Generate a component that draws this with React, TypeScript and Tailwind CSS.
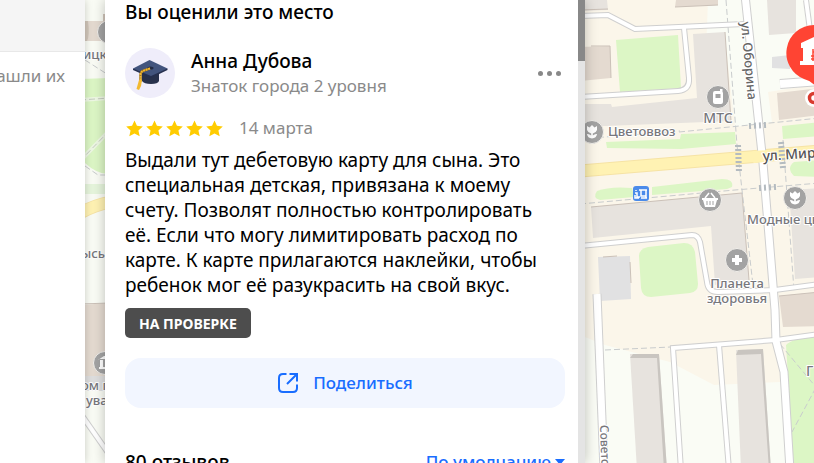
import React from 'react';
import { clsx } from 'clsx';

const STAR = 'M8 0.4l2.300 5.100 5.500.6-4.100 3.700 1.200 5.500L8 12.600l-4.900 2.700 1.200-5.500L.2 6.100l5.500-.6z';

const reviewText =
    'Выдали тут дебетовую карту для сына. Это специальная детская, привязана к моему счету. Позволят полностью контролировать её. Если что могу лимитировать расход по карте. К карте прилагаются наклейки, чтобы ребенок мог её разукрасить на свой вкус.';

const roads = [
    { d: 'M580 16L608 15L635 29L744 24', w: 4 },
    { d: 'M684 28L689 78Q690 90 678 91L580 97', w: 4 },
    { d: 'M780 84L820 81', w: 8 },
    { d: 'M806 0L810 30', w: 4 },
    { d: 'M580 246L692 235Q698 235 700 242L707 282Q708 292 718 292L775 290L820 284', w: 4 },
    { d: 'M597 294L604 470', w: 7 },
    { d: 'M681 470L673 348L776 340L820 334', w: 4 },
    { d: 'M719 345L729 470', w: 4 },
    { d: 'M745 -5L763 163L775 310L776 341L784 372L790 470', w: 7 },
    { d: 'M76 407L125 477', w: 4 },
];

const greens = [
    'M616 40L678 35L681 88L620 92Z',
    'M606 142L680 139L681 134L735 132L736 144L681 149L607 148Z',
    'M782 126L820 122L820 136L783 139Z',
    'M597 191Q610 186 632 188L634 197L600 200Q592 198 597 191Z',
    'M652 187L722 179Q734 179 732 187L727 189L652 195Z',
    'M794 162L820 160L820 177L794 176Q786 168 794 162Z',
    'M648 247L684 243Q693 243 695 252L698 284Q698 292 690 293L651 297Q642 297 641 288L639 256Q639 249 648 247Z',
    'M786 345Q795 336 820 337L820 470L794 470Z',
    'M80 79L110 78L110 174Q98 175 85 163L80 160Z',
];

const greyHouses = [
    'M580 0L607 0L608 10L580 11Z',
    'M693 34L725 32L731 121L580 127L580 104L611 104L612 107L697 98Z',
    'M767 0L796 0L796 33L769 35Z',
    'M591 207L742 193L749 280L715 285L711 226L593 238Z',
    'M789 190L820 188L820 277L795 279Z',
    'M630 354L659 354L667 470L637 470Z',
    'M736 350L763 349L771 470L741 470Z',
];

const tanHouses = [
    'M676 0L718 0L718 5L675 7Z',
    'M580 47L610 46L611 78L580 81Z',
    'M777 93L820 88L820 115L779 120Z',
    'M779 296L820 292L820 326L783 327Z',
    'M80 21L110 21L110 41L80 41Z',
    'M80 305L110 303L110 377L80 377Z',
];

const dashes = [
    'M726 0L737 145L742 190L753 285',
    'M679 132L780 122L820 118',
    'M580 139L680 131',
    'M580 204L735 190L820 183',
    'M783 140L794 290',
    'M605 350L671 347',
    'M780 344L820 392',
    'M820 380L792 432',
    'M85 60L110 76M85 166L98 175L110 175',
];

const houseEdges = [
    'M580 10L608 9',
    'M675 7L718 5',
    'M610 46L611 78M591 46L610 46',
    'M591 207L742 193L749 280',
    'M725 32L731 121',
    'M603 257L617 256M630 262L631 283',
    'M779 296L820 292',
    'M80 304L110 303',
];

const parkPaths = 'M80 100L110 98M80 161L110 130';

function CityMap() {
    return (
        <svg
            className="absolute inset-0 h-full w-full"
            viewBox="0 0 814 463"
            preserveAspectRatio="xMinYMin slice"
            fontFamily="'Noto Sans', sans-serif"
            role="img"
            aria-label="Карта"
        >
            <rect width="814" height="463" fill="#fafcf5" />
            <path
                d="M580 0H708L706 52L727 55L735 127L772 122L768 92L820 84V160L820 340L780 382L714 385L670 362L605 345L580 335Z"
                fill="#fbf6ea"
            />
            {greens.map((d) => (
                <path key={d} d={d} fill="#dcf6c5" />
            ))}
            <path d="M80 184L110 184L110 194L80 194Z" fill="#e6f5dc" />
            {greyHouses.map((d) => (
                <path key={d} d={d} fill="#e7e3de" />
            ))}
            {tanHouses.map((d) => (
                <path key={d} d={d} fill="#e4dad0" />
            ))}
            <path d="M80 21h8q2 14-1 20h-7zM103 14h7v8h-7z" fill="#d0c5b9" />
            <path d="M598 257L630 256L631 299L600 301ZM772 57L790 55L790 69L772 68Z" fill="#e1e1e2" />
            <path d="M80 376H110V391H80Z" fill="#dedede" />
            <path
                d="M630 358L633 354L659 354L667 470L664 470L657 358ZM736 355L738 350L763 349L771 470L769 470L761 354Z"
                fill="#c9c5c0"
            />
            {houseEdges.map((d) => (
                <path key={d} d={d} fill="none" stroke="#cbc1b8" />
            ))}
            <path d={parkPaths} fill="none" stroke="#eef8e4" strokeWidth="4" />
            <path d={parkPaths} fill="none" stroke="#c5ccc0" strokeDasharray="6 3" />
            {dashes.map((d) => (
                <path key={d} d={d} fill="none" stroke="#c9cccd" strokeDasharray="6 3" />
            ))}

            <path d="M580 171L820 151M80 213Q95 205 110 202" fill="none" stroke="#f6e3a5" strokeWidth="13" />
            <path d="M580 171L820 151M80 213Q95 205 110 202" fill="none" stroke="#fff2b3" strokeWidth="11" />
            {roads.map((r) => (
                <path key={r.d} d={r.d} fill="none" stroke="#cfcfcf" strokeWidth={r.w + 2} />
            ))}
            {roads.map((r) => (
                <path key={r.d} d={r.d} fill="none" stroke="#fff" strokeWidth={r.w} />
            ))}
            <path d="M753 157L769 156" stroke="#fff2b3" strokeWidth="12" />
            <path
                d="M738 145L739 173M781 142L783 168"
                fill="none"
                stroke="#b4bbc0"
                strokeWidth="6"
                strokeDasharray="2 2"
            />
            <path
                d="M749 126L766 125M759 188L776 187"
                fill="none"
                stroke="#b4bbc0"
                strokeWidth="6"
                strokeDasharray="2 3"
            />

            {/* places */}
            <g fill="#a3a3a3" stroke="#f2f0ec">
                <circle cx="592" cy="132" r="11.5" />
                <circle cx="718" cy="97" r="11.5" />
                <circle cx="710" cy="200" r="11.5" />
                <circle cx="795" cy="198" r="11.5" />
                <circle cx="737" cy="260" r="11.5" />
                <circle cx="105" cy="363" r="11.5" />
                <circle cx="109" cy="32" r="11.5" />
            </g>
            <g fill="#fff">
                <path
                    id="tulip"
                    d="M587 126l2.500 1.500L592 125l2.500 2.500L597 126v4q-1 3-4.200 3.400v2.200q2-2 4.200-1.600-.5 4-5 4.500-4.500-.5-5-4.500 2.200-.4 4.200 1.600v-2.200Q588 133 587 130z"
                />
                <use href="#tulip" x="203" y="66" />
                <path
                    fillRule="evenodd"
                    d="M715 91h5v-2h2.500v3q.5.500.5 1v9q0 2-2 2h-6q-2 0-2-2v-9q0-2 2-2zm.5 3v4h5v-4z"
                />
                <path d="M735 255h4v3h3v4h-3v3h-4v-3h-3v-4h3z" />
                <path d="M702 198h16v2h-1l-2 7h-10l-2-7h-1z" />
                <path d="M98 360l6-4h6v3h-11zM100 360h3v8h-3zM105 360h3v8h-3zM99 367h12v2H99z" />
            </g>
            <path d="M705 198l4-5M715 198l-4-5" stroke="#fff" strokeWidth="1.5" />
            <path d="M707 201v4M710 201v4M713 201v4" stroke="#a3a3a3" />
            <rect x="633" y="186" width="16" height="15" rx="3" fill="#4b8bea" />
            <path
                d="M639 190h8M641 190v6h5v-6M636 190v1M635 193h2v4h3M635 195v3h4M646 196v2M641 198h6"
                fill="none"
                stroke="#fff"
                strokeWidth="1.5"
            />

            <g
                fill="#77777c"
                stroke="#fff"
                strokeWidth="2"
                strokeLinejoin="round"
                paintOrder="stroke"
                fontSize="13"
                fontWeight="500"
            >
                <text x="608" y="136">Цветоввоз</text>
                <text x="718" y="123" textAnchor="middle" fontSize="14">МТС</text>
                <text x="747" y="224">Модные цветы</text>
                <text x="737" y="288" textAnchor="middle">Планета</text>
                <text x="737" y="303" textAnchor="middle">здоровья</text>
                <text x="806" y="376" fontSize="14">Г</text>
                <text x="83" y="59">ицк</text>
                <text x="81" y="258">ысь</text>
                <text x="81" y="390">ом п</text>
                <text x="86" y="405">ува</text>
                <text transform="translate(741 22) rotate(85)" fill="#666">ул. Оборина</text>
                <text transform="translate(600 425) rotate(88)" fontSize="12">Советская</text>
                <text transform="translate(763 161) rotate(-4)" fill="#555" fontSize="14">ул. Мира</text>
            </g>

            {/* selected place */}
            <path d="M816 25h-2a28 28 0 0 0-10 54q8 2 12 8z" fill="#ff4433" />
            <path d="M801 48v-5l15-7v29h-16v-4h3V48z" fill="#fff" />
            <path d="M813 52h3M811 56h5M811 59h5M813 49v12" fill="none" stroke="#ff4433" strokeWidth="1.5" />
            <circle cx="814" cy="98" r="9" fill="#fff" />
            <path d="M816 93.500h-2a4.500 4.500 0 0 0 0 9h2" fill="none" stroke="#d93a2f" strokeWidth="3.500" />
        </svg>
    );
}

function GraduationCap() {
    return (
        <svg viewBox="0 0 50 50" className="h-[50px] w-[50px] shrink-0" aria-hidden="true">
            <circle cx="25" cy="25" r="25" fill="#efedfa" />
            <path d="M17 23v10q2 3 9 3t8-3V23z" fill="#28314c" />
            <path d="M8 20.500v1.500l18 8 16.500-8v-1.500z" fill="#26304f" />
            <path d="M8 20.500L24.500 12 42.500 20.500 26 28z" fill="#42547d" />
            <ellipse cx="25.500" cy="20" rx="3" ry="1.500" fill="#222b44" />
            <path d="M25 20.500l-6 2q-3.500 1-3.500 5v6" fill="none" stroke="#8a6420" strokeWidth="2.500" />
            <path d="M25 20.500l-6 2q-3.500 1-3.500 5v6" fill="none" stroke="#f2b930" strokeWidth="2" strokeDasharray="2 .6" />
            <path d="M14 32h3l-1 6-2 4-2.500-1z" fill="#f2b930" />
        </svg>
    );
}

function ShareIcon() {
    return (
        <svg
            viewBox="0 0 22 22"
            className="h-[22px] w-[22px]"
            fill="none"
            stroke="#196dff"
            strokeWidth="2"
            aria-hidden="true"
        >
            <path d="M9.500 2H6Q2 2 2 6v10q0 4 4 4h10q4 0 4-4v-3.500" />
            <path d="M10 12L19.500 2.500M12.500 2H20v7.500" />
        </svg>
    );
}

function Stars({ count }: { count: number }) {
    return (
        <div className="flex gap-[3px]" role="img" aria-label={`Оценка ${count} из 5`}>
            {[1, 2, 3, 4, 5].map((n) => (
                <svg
                    key={n}
                    viewBox="0 0 16 16"
                    className={clsx('h-[17px] w-[17px]', n <= count ? 'fill-[#ffcc00]' : 'fill-gray-300')}
                >
                    <path d={STAR} />
                </svg>
            ))}
        </div>
    );
}

function Review() {
    return (
        <article>
            <div className="flex items-center">
                <GraduationCap />
                <div className="ml-4 flex-1">
                    <h3 className="text-[19px] leading-[26px] font-medium">Анна Дубова</h3>
                    <p className="text-[17px] leading-6 text-[#8a8a8a]">Знаток города 2 уровня</p>
                </div>
                <button type="button" aria-label="Ещё" className="mr-1 flex gap-1">
                    <span className="h-[5px] w-[5px] rounded-full bg-[#888]" />
                    <span className="h-[5px] w-[5px] rounded-full bg-[#888]" />
                    <span className="h-[5px] w-[5px] rounded-full bg-[#888]" />
                </button>
            </div>
            <div className="mt-[18px] flex h-6 items-center gap-4 pl-px">
                <Stars count={5} />
                <time className="text-[17px] leading-6 text-[#8a8a8a]">14 марта</time>
            </div>
            <p className="mt-2 pr-4 text-[19px] leading-[25px]">{reviewText}</p>
            <span className="mt-[10px] inline-flex h-[30px] items-center rounded-[5px] bg-[#4d4d4d] px-[14px] text-[14px] font-bold text-white">
                НА ПРОВЕРКЕ
            </span>
        </article>
    );
}

export default function App() {
    return (
        <main className="relative h-screen overflow-hidden bg-white font-['Noto_Sans',sans-serif] text-black">
            <CityMap />
            <div className="relative flex h-full gap-5">
                <aside className="w-[85px] shrink-0 overflow-hidden bg-white shadow-[0_0_8px_rgba(0,0,0,0.2)]">
                    <div className="h-[52px] border-b border-[#e8e8e8] bg-[#f5f5f5]" />
                    <p className="mt-3 flex justify-end pr-5 text-[17px] leading-6 whitespace-nowrap text-[#8a8a8a]">нашли их</p>
                </aside>

                <section className="flex w-[480px] shrink-0 overflow-hidden bg-white shadow-[0_0_12px_rgba(0,0,0,0.25)]">
                    <div className="w-[473px] pr-[13px] pl-5">
                        <h2 className="mb-6 text-[19px] leading-6 font-medium">Вы оценили это место</h2>
                        <Review />
                        <button
                            type="button"
                            className="mt-5 flex h-[50px] w-full items-center justify-center gap-[14px] rounded-2xl bg-[#f2f6ff] text-[17px] font-medium text-[#196dff]"
                        >
                            <ShareIcon />
                            Поделиться
                        </button>
                        <div className="mt-[42px] flex items-center justify-between">
                            <h2 className="text-[19px] leading-6 font-medium">80 отзывов</h2>
                            <button type="button" className="flex items-center gap-1 text-[17px] leading-6 font-medium text-[#196dff]">
                                По умолчанию
                                <svg viewBox="0 0 10 6" className="h-[6px] w-[10px] fill-[#196dff]" aria-hidden="true">
                                    <path d="M0 0h10L5 6z" />
                                </svg>
                            </button>
                        </div>
                    </div>
                    <div className="w-[7px] bg-[#e4e4e4]">
                        <div className="h-[61px] bg-[#888]" />
                    </div>
                </section>
            </div>
        </main>
    );
}
